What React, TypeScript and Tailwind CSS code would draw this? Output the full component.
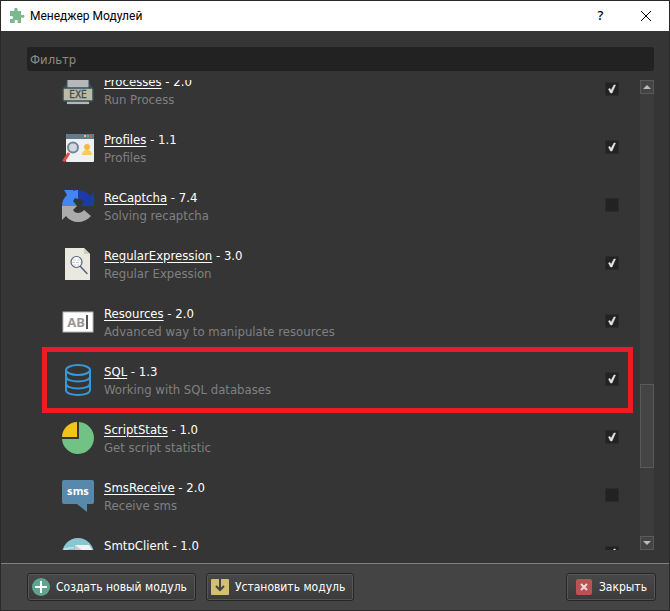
import React, { useState } from "react";

function PuzzleIcon() {
  return (
    <svg viewBox="0 0 16 16" className="h-4 w-4" fill="#7bb88c">
      <path d="M1 3h4.300c.4-.8-.2-1.200 0-2C5.500.300 6.200 0 7 0s1.600.4 1.700 1.100c.1.700-.5 1.100-.2 1.900H12v4c1 .4 1.300-.4 2.100-.3.800.1 1.400.7 1.400 1.500s-.6 1.500-1.400 1.600c-.8.1-1.200-.6-2.100-.2V15H8.600c-.4-.9.300-1.300.1-2-.2-.6-.9-1-1.600-1s-1.500.4-1.600 1c-.1.800.5 1.200.2 2H1v-4c.8-.3 1.200.2 1.900.1.700-.1 1.200-.8 1.200-1.600S3.600 8 2.900 7.900C2.200 7.800 1.800 8.400 1 8z" />
    </svg>
  );
}

function ProcessesIcon() {
  return (
    <svg viewBox="0 0 32 32" className="h-8 w-8">
      <path d="M5 1h17l5 5v24H5z" fill="#b7b7b9" stroke="#35505a" />
      <path d="M1 14l4-5v5zM31 14l-4-5v5z" fill="#35505a" />
      <path d="M5 28h22v2H5z" fill="#b7b7b9" />
      <rect x="1" y="14" width="30" height="13" rx="1" fill="#bcb9a4" stroke="#35505a" strokeWidth="1.5" />
      <text x="16" y="24" textAnchor="middle" fontFamily="DejaVu Sans Condensed" fontSize="10" fill="#35505a" stroke="#35505a" strokeWidth=".3">
        EXE
      </text>
    </svg>
  );
}

function ProfilesIcon() {
  return (
    <svg viewBox="0 0 32 32" className="h-8 w-8">
      <rect x="4" y="2" width="28" height="28" rx="1" fill="#edf1f4" />
      <path d="M5 2h26a1 1 0 0 1 1 1v4H4V3a1 1 0 0 1 1-1z" fill="#64798a" />
      <path d="M22 3h2v2h-2z" fill="#efc75e" />
      <path d="M25 3h2v2h-2z" fill="#4fba9b" />
      <path d="M28 3h2v2h-2z" fill="#e2574c" />
      <circle cx="25" cy="15" r="3" fill="#f4b944" />
      <path d="M20 23c0-3 2-5 5-5s5 2 5 5z" fill="#fbc95c" />
      <path d="M7 21L1.500 29.500" stroke="#d9503f" strokeWidth="3" />
      <circle cx="11" cy="15.500" r="5" fill="#d3d8e0" stroke="#71869b" strokeWidth="2" />
    </svg>
  );
}

function ReCaptchaIcon() {
  return (
    <svg viewBox="0 0 32 32" className="h-8 w-8">
      <path d="M16 0v9l-3-1-2 3 4 5H0C0 11 2 8 5 5L2 0h9l1 1c1-1 2-1 4-1z" fill="#4285f4" />
      <path d="M16 0c5 0 9 2 12 6l4-4v14H18l4-4c-1-2-3-3-6-3z" fill="#1c3aa9" />
      <path d="M0 16h15l-4 4c2 4 8 4 11 0l7 6c-7 8-19 8-25 0l-4 4z" fill="#ababab" />
    </svg>
  );
}

function RegexIcon() {
  return (
    <svg viewBox="0 0 32 32" className="h-8 w-8">
      <path d="M3 0h19l6 6v26H3z" fill="#e9e9e0" />
      <path d="M22 0v6h6z" fill="#d0cfbe" />
      <path d="M18 18l7 7.500" stroke="#556080" strokeWidth="1.500" strokeLinecap="round" />
      <circle cx="14.500" cy="14" r="5.500" fill="#fff" stroke="#556080" strokeWidth="1.200" />
      <path d="M11 12h7M10 14.500h9M11 17h6" stroke="#c7cad3" strokeDasharray="3 1" />
    </svg>
  );
}

function ResourcesIcon() {
  return (
    <svg viewBox="0 0 32 32" className="h-8 w-8">
      <rect x="1" y="6" width="30" height="20" fill="#fff" stroke="#b5b5b5" />
      <text x="14" y="21" textAnchor="middle" fontFamily="Noto Sans" fontSize="13" fontWeight="bold" fill="#999">
        AB
      </text>
      <path d="M25 9v14" stroke="#555" strokeWidth="2" />
    </svg>
  );
}

function SqlIcon() {
  return (
    <svg viewBox="0 0 32 32" className="h-8 w-8" fill="none" stroke="#3498db" strokeWidth="2">
      <ellipse cx="16" cy="6" rx="12" ry="5" />
      <path d="M4 6v20c0 3 5 5 12 5s12-2 12-5V6" />
      <path d="M4 12.500c0 3 5 5 12 5s12-2 12-5M4 19.500c0 3 5 5 12 5s12-2 12-5" />
    </svg>
  );
}

function StatsIcon() {
  return (
    <svg viewBox="0 0 32 32" className="h-8 w-8">
      <path d="M15 0v15H0C0 7 7 0 15 0z" fill="#f0c419" />
      <path d="M17 0a16 16 0 1 1-17 17h17z" fill="#71c285" />
    </svg>
  );
}

function SmsIcon() {
  return (
    <svg viewBox="0 0 32 32" className="h-8 w-8">
      <path d="M2 0h28a2 2 0 0 1 2 2v20a2 2 0 0 1-2 2h-5v8l-10-8H2a2 2 0 0 1-2-2V2a2 2 0 0 1 2-2z" fill="#5889ad" />
      <text x="16" y="15" textAnchor="middle" fontFamily="Noto Sans" fontSize="11" fontWeight="bold" fill="#fff">
        sms
      </text>
    </svg>
  );
}

function SmtpIcon() {
  return (
    <svg viewBox="0 0 32 32" className="h-8 w-8">
      <circle cx="16" cy="16" r="16" fill="#8ac6cf" />
      <path d="M13 7h14l4 6v8H13z" fill="#f2f2f2" />
      <path d="M13 7l8 6h-8z" fill="#c9c9c9" />
      <path d="M6 10h6M2 11h4" stroke="#f2f2f2" />
    </svg>
  );
}

const initialModules = [
  { name: "Processes", version: "2.0", description: "Run Process", icon: <ProcessesIcon />, enabled: true },
  { name: "Profiles", version: "1.1", description: "Profiles", icon: <ProfilesIcon />, enabled: true },
  { name: "ReCaptcha", version: "7.4", description: "Solving recaptcha", icon: <ReCaptchaIcon />, enabled: false },
  { name: "RegularExpression", version: "3.0", description: "Regular Expession", icon: <RegexIcon />, enabled: true },
  { name: "Resources", version: "2.0", description: "Advanced way to manipulate resources", icon: <ResourcesIcon />, enabled: true },
  { name: "SQL", version: "1.3", description: "Working with SQL databases", icon: <SqlIcon />, enabled: true, highlighted: true },
  { name: "ScriptStats", version: "1.0", description: "Get script statistic", icon: <StatsIcon />, enabled: true },
  { name: "SmsReceive", version: "2.0", description: "Receive sms", icon: <SmsIcon />, enabled: false },
  { name: "SmtpClient", version: "1.0", description: "", icon: <SmtpIcon />, enabled: true },
];

function ModuleRow({ module, onToggle }: { module: any; onToggle: (name: string) => void }) {
  return (
    <li className="relative flex h-[58px] shrink-0 items-center pr-3.5 pl-5">
      {module.icon}
      <div className="ml-2.5 h-9 flex-grow leading-[18px]">
        <p className="pt-px text-white">
          <a href="#" className="underline underline-offset-2">{module.name}</a> - {module.version}
        </p>
        <p className="text-[#808080]">{module.description}</p>
      </div>
      <label className="mb-0.5 grid h-3.5 w-3.5">
        <input
          type="checkbox"
          aria-label={module.name}
          checked={module.enabled}
          onChange={() => onToggle(module.name)}
          className="peer col-start-1 row-start-1 h-3.5 w-3.5 appearance-none border border-[#2b2b2b] bg-[#222]"
        />
        <svg viewBox="0 0 14 14" className="pointer-events-none invisible col-start-1 row-start-1 h-3.5 w-3.5 peer-checked:visible">
          <path d="M3.500 7l1.500-.5L6 8.500 9 3h1.500L7 11H5.500z" fill="#e6e6e6" stroke="#e6e6e6" strokeWidth=".5" />
        </svg>
      </label>
      {module.highlighted && (
        <div className="pointer-events-none absolute inset-x-0 -inset-y-1 border-5 border-[#ed1c24]" />
      )}
    </li>
  );
}

const buttonStyle =
  "flex h-7 items-center rounded-[3px] border border-[#262626] bg-linear-to-b from-[#484848] to-[#3b3b3b] text-[12px] text-white inset-ring inset-ring-[#555]";

export default function App() {
  const [filter, setFilter] = useState("");
  const [modules, setModules] = useState(initialModules);

  const toggle = (name: string) => {
    setModules(modules.map((m) => (m.name === name ? { ...m, enabled: !m.enabled } : m)));
  };

  return (
    <div className="flex h-screen flex-col border border-[#292929] bg-[#353535] font-['DejaVu_Sans_Condensed','DejaVu_Sans',sans-serif] text-[13px]">
      <header className="flex h-[30px] shrink-0 items-center bg-white pl-2 text-black">
        <PuzzleIcon />
        <h1 className="ml-[5px] flex-grow font-['Roboto','Noto_Sans',sans-serif] text-[12px]">Менеджер Модулей</h1>
        <button aria-label="Help" className="h-full w-[45px] font-['Noto_Sans',sans-serif] font-medium">?</button>
        <button aria-label="Close" className="flex h-full w-[46px] items-center justify-center">
          <svg viewBox="0 0 10 10" className="h-2.5 w-2.5" stroke="#000" fill="none">
            <path d="M0 0l10 10M10 0L0 10" />
          </svg>
        </button>
      </header>

      <main className="flex min-h-0 flex-grow flex-col px-[15px] pt-4 pb-[13px]">
        <input
          aria-label="Фильтр"
          placeholder="Фильтр"
          value={filter}
          onChange={(e) => setFilter(e.target.value)}
          className="ml-[11px] h-6 shrink-0 rounded-[3px] bg-[#222] px-[3px] text-white outline-none placeholder:text-[#8a8a8a]"
        />
        <div className="mt-[9px] ml-[26px] flex min-h-0 flex-grow gap-[7px]">
          <div className="min-w-0 flex-grow overflow-hidden">
            {/* List is scrolled part of the way into the first row */}
            <ul className="-mt-[19px] flex flex-col">
              {modules
                .filter((m) => m.name.toLowerCase().includes(filter.toLowerCase()))
                .map((m) => (
                  <ModuleRow key={m.name} module={m} onToggle={toggle} />
                ))}
            </ul>
          </div>
          {/* Scrollbar */}
          <div className="flex w-3.5 shrink-0 flex-col bg-[#3c3c3c]">
            <button aria-label="Scroll up" className="flex h-3.5 items-center justify-center border border-[#5a5a5a] bg-[#444]">
              <svg viewBox="0 0 8 4" className="h-1 w-2" fill="#bbb"><path d="M4 0l4 4H0z" /></svg>
            </button>
            <div className="flex-[291]" />
            <div className="flex-[83] border border-[#5a5a5a] bg-[#444]" />
            <div className="flex-[68]" />
            <button aria-label="Scroll down" className="flex h-3.5 items-center justify-center border border-[#5a5a5a] bg-[#444]">
              <svg viewBox="0 0 8 4" className="h-1 w-2" fill="#bbb"><path d="M0 0h8L4 4z" /></svg>
            </button>
          </div>
        </div>
      </main>

      <footer className="flex h-[47px] shrink-0 items-center gap-2.5 border-t border-[#808080] bg-[#444] pr-[13px] pl-[26px]">
        <button className={`${buttonStyle} gap-1.5 pr-2 pl-1`}>
          <svg viewBox="0 0 18 18" className="h-[18px] w-[18px]">
            <circle cx="9" cy="9" r="9" fill="#5fa48e" />
            <path d="M9 3v12M3 9h12" stroke="#fff" strokeWidth="2" />
          </svg>
          Создать новый модуль
        </button>
        <button className={`${buttonStyle} gap-1.5 pr-2 pl-1`}>
          <svg viewBox="0 0 18 18" className="h-[18px] w-[18px]">
            <rect y="1" width="18" height="16" rx="1" fill="#d3bf72" />
            <path d="M9 1v10M5 8l4 4 4-4" fill="none" stroke="#444" strokeWidth="2" />
          </svg>
          Установить модуль
        </button>
        <button className={`${buttonStyle} ml-auto gap-1.5 px-2`}>
          <svg viewBox="0 0 18 18" className="h-[18px] w-[18px]">
            <rect x="1" y="1" width="16" height="16" rx="2" fill="#b95353" />
            <path d="M6 6l6 6M12 6l-6 6" stroke="#f0d8d8" strokeWidth="2" />
          </svg>
          Закрыть
        </button>
      </footer>
    </div>
  );
}
